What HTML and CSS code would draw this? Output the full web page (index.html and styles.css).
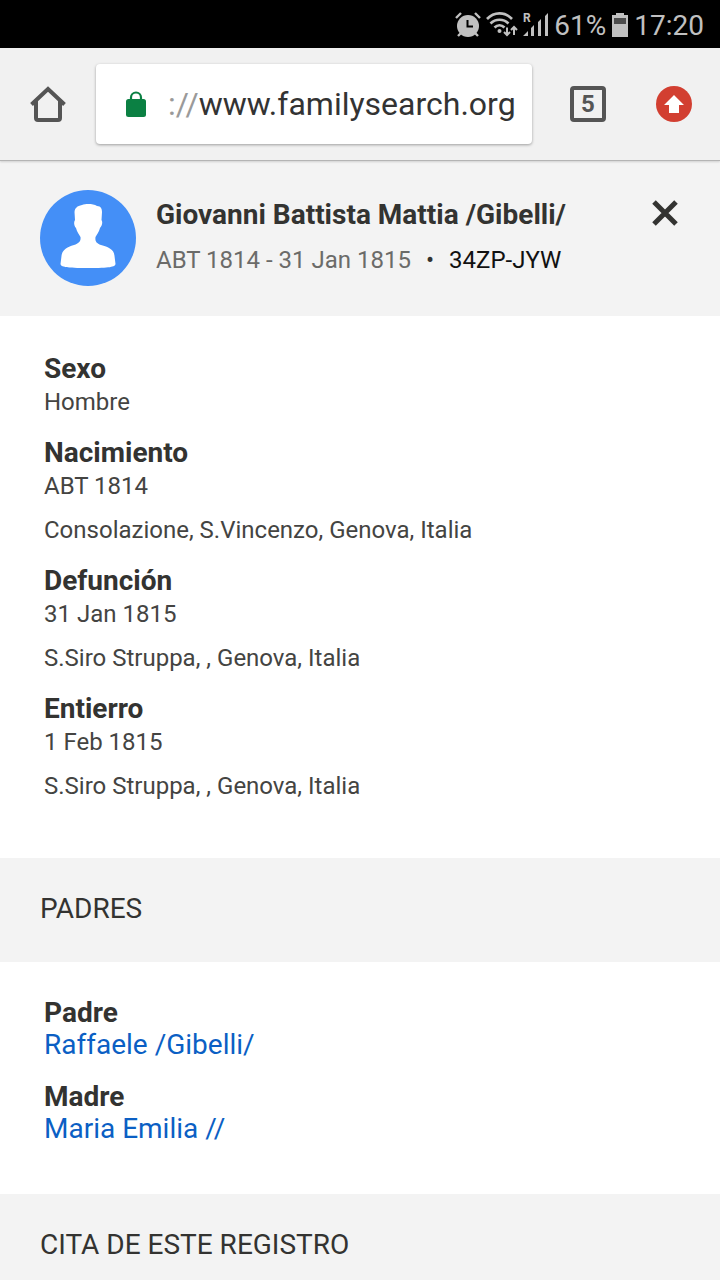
FILE: index.html
```html
<!DOCTYPE html>
<html lang="es">
  <head>
    <meta charset="UTF-8" />
    <meta name="viewport" content="width=device-width, initial-scale=1.0" />
    <title>Giovanni Battista Mattia /Gibelli/</title>
    <link rel="stylesheet" href="styles.css">
  </head>
  <body>
    <div class="status-bar">
      <div class="status-icons">
        <svg class="alarm" width="26" height="26" viewBox="0 0 26 26">
          <circle cx="13" cy="14" r="11" fill="currentColor" />
          <path d="M1 6l5-5M20 1l5 5M6 21l-3 3M20 21l3 3" stroke="currentColor" stroke-width="2.4" />
          <path d="M12.5 8v6.5H18" fill="none" stroke="#000" stroke-width="2" />
        </svg>
        <svg class="wifi" width="32" height="26" viewBox="0 0 32 26" fill="none" stroke="currentColor">
          <path d="M1 7C8-.5 19-.5 26 7M4.500 11.500c5-5 13-5 18 0M8.500 15.500c3-3 7-3 10 0" stroke-width="2.6" />
          <circle cx="13.500" cy="19" r="2" fill="currentColor" stroke="none" />
          <path d="M21 15.500V23M18 20l3 3 3-3M28 23v-7.500M25 18l3-3 3 3" stroke-width="2" />
        </svg>
        <svg class="signal" width="25" height="26" viewBox="0 0 25 26" fill="currentColor">
          <path d="M0 24l5-5v5zM8 16l3-3v11H8zM15 10l3-3v17h-3zM22 4l3-3v23h-3z" />
          <text class="roaming" x="0" y="10">R</text>
        </svg>
      </div>
      <span class="battery-level">61%</span>
      <svg class="battery" width="16" height="24" viewBox="0 0 16 24">
        <path d="M4 0h8v2h4v22H0V2h4z" fill="currentColor" />
        <path d="M2 5h12v6H2z" fill="#4c4c4c" />
      </svg>
      <span>17:20</span>
    </div>

    <div class="toolbar">
      <button class="tool-button" aria-label="Inicio">
        <svg width="36" height="36" viewBox="0 0 36 36" fill="none" stroke="currentColor" stroke-width="4">
          <path d="M1.500 18.500L18 3 34.500 18.500" />
          <path d="M6 15v17q0 2 2 2h20q2 0 2-2V15" />
        </svg>
      </button>
      <label class="address">
        <svg class="lock" width="20" height="26" viewBox="0 0 20 26">
          <path d="M5 10V6.500a5 5 0 0 1 10 0V10" fill="none" stroke="currentColor" stroke-width="2.200" />
          <rect y="8" width="20" height="18" rx="2.500" fill="currentColor" />
        </svg>
        <span class="scheme">://</span>
        <input class="url" type="text" value="www.familysearch.org" aria-label="Dirección" />
      </label>
      <button class="tabs">5</button>
      <button class="update" aria-label="Actualizar">
        <svg width="36" height="36" viewBox="0 0 36 36">
          <circle cx="18" cy="18" r="18" fill="#d23f31" />
          <path d="M18 9l10 10h-5v8H13v-8H8z" fill="#fff" />
        </svg>
      </button>
    </div>

    <header class="person">
      <svg class="avatar" width="96" height="96" viewBox="0 0 96 96">
        <circle cx="48" cy="48" r="48" fill="#448ff7" />
        <path d="M42 15C46 13.500 53 13.500 57 16C61 16 62 19 62 22L61.500 30C63 32 62 36 60 38C59 42 57 44 55.500 47C55 51 56 53 61 55C68 57 74 59 74.500 66L75.500 74C75 77 70 78 48 78C26 78 21 77 20.500 74L21.500 66C22 60 27 57 34 55C39 53 41 51 40.500 47C39 44 37 42 36 38C34 36 33.500 32 35 30L34.500 22C35 18 37 16 42 15Z" fill="#fff" />
      </svg>
      <div class="person-info">
        <h1 class="name">Giovanni Battista Mattia /Gibelli/</h1>
        <p class="lifespan">
          <span>ABT 1814 - 31 Jan 1815</span>
          <span class="dot">•</span>
          <span class="person-id">34ZP-JYW</span>
        </p>
      </div>
      <button class="close" aria-label="Cerrar">
        <svg width="26" height="26" viewBox="0 0 26 26" stroke="currentColor" stroke-width="5">
          <path d="M2 2l22 22M24 2L2 24" />
        </svg>
      </button>
    </header>

    <main>
      <dl class="details">
        <dt>Sexo</dt>
        <dd>Hombre</dd>
        <dt>Nacimiento</dt>
        <dd>ABT 1814</dd>
        <dd>Consolazione, S.Vincenzo, Genova, Italia</dd>
        <dt>Defunción</dt>
        <dd>31 Jan 1815</dd>
        <dd>S.Siro Struppa, , Genova, Italia</dd>
        <dt>Entierro</dt>
        <dd>1 Feb 1815</dd>
        <dd>S.Siro Struppa, , Genova, Italia</dd>
      </dl>

      <h2 class="section-title">PADRES</h2>
      <dl class="details parents">
        <dt>Padre</dt>
        <dd><a href="#padre">Raffaele /Gibelli/</a></dd>
        <dt>Madre</dt>
        <dd><a href="#madre">Maria Emilia //</a></dd>
      </dl>

      <h2 class="section-title">CITA DE ESTE REGISTRO</h2>
    </main>
  </body>
</html>
```
FILE: styles.css
```css
* {
  margin: 0;
  padding: 0;
  box-sizing: border-box;
}

body {
  font-family: Roboto, sans-serif;
  font-size: 24px;
  color: #333331;
  background: #fff;
  height: 100vh;
  overflow: hidden;
}

button {
  border: none;
  background: none;
  font: inherit;
  color: inherit;
  cursor: pointer;
}

svg {
  display: block;
  flex-shrink: 0;
}

.status-bar {
  display: flex;
  justify-content: flex-end;
  align-items: center;
  gap: 6px;
  height: 48px;
  padding: 2px 16px 0;
  background: #000;
  color: #c0c0c0;
  font-size: 28px;
}

.status-icons {
  display: flex;
  gap: 5px;
}

.roaming {
  font-size: 12px;
  font-weight: 700;
}

.toolbar {
  display: flex;
  align-items: center;
  height: 113px;
  padding: 0 28px 0 30px;
  background: #f1f1f1;
  border-bottom: 1px solid #b4b4b4;
  box-shadow: 0 1px 2px rgba(0, 0, 0, 0.15);
  position: relative;
  color: #555;
}

.address {
  display: flex;
  flex: 1;
  align-items: center;
  min-width: 0;
  height: 80px;
  margin: 0 38px 0 30px;
  padding: 0 14px 0 30px;
  background: #fff;
  border-radius: 4px;
  box-shadow: 0 1px 3px rgba(0, 0, 0, 0.35);
  font-size: 32px;
}

.lock {
  color: #0b8043;
  margin-right: 22px;
}

.scheme {
  color: #9a9a9a;
}

.url {
  flex: 1;
  min-width: 0;
  border: none;
  outline: none;
  background: none;
  font: inherit;
  color: #333;
}

.tabs {
  width: 36px;
  height: 36px;
  margin-right: 50px;
  border: 4px solid #555;
  border-radius: 4px;
  font-size: 24px;
  font-weight: 700;
  line-height: 28px;
}

.person {
  display: flex;
  align-items: flex-start;
  gap: 20px;
  padding: 29px 42px 30px 40px;
  background: #f3f3f3;
}

.person-info {
  flex: 1;
  padding-top: 7px;
}

.name {
  font-size: 28px;
  line-height: 36px;
}

.lifespan {
  display: flex;
  gap: 15px;
  margin-top: 12px;
  line-height: 30px;
  color: #6b6b69;
}

.dot {
  color: #333331;
}

.person-id {
  color: #111;
}

.close {
  margin-top: 10px;
}

.details {
  padding: 35px 44px 57px;
}

.details dt {
  font-size: 28px;
  font-weight: 700;
  line-height: 36px;
}

.details dd {
  line-height: 30px;
  color: #444442;
}

.details dd + dd {
  margin-top: 14px;
}

.details dd + dt {
  margin-top: 18px;
}

.parents {
  padding: 33px 44px 51px;
}

.parents dd {
  font-size: 28px;
  line-height: 28px;
}

.parents dd + dt {
  margin-top: 20px;
}

.parents a {
  color: #0b5fc4;
  text-decoration: none;
}

.section-title {
  padding: 33px 40px 35px;
  background: #f3f3f3;
  font-size: 28px;
  font-weight: 400;
  line-height: 36px;
}
```
